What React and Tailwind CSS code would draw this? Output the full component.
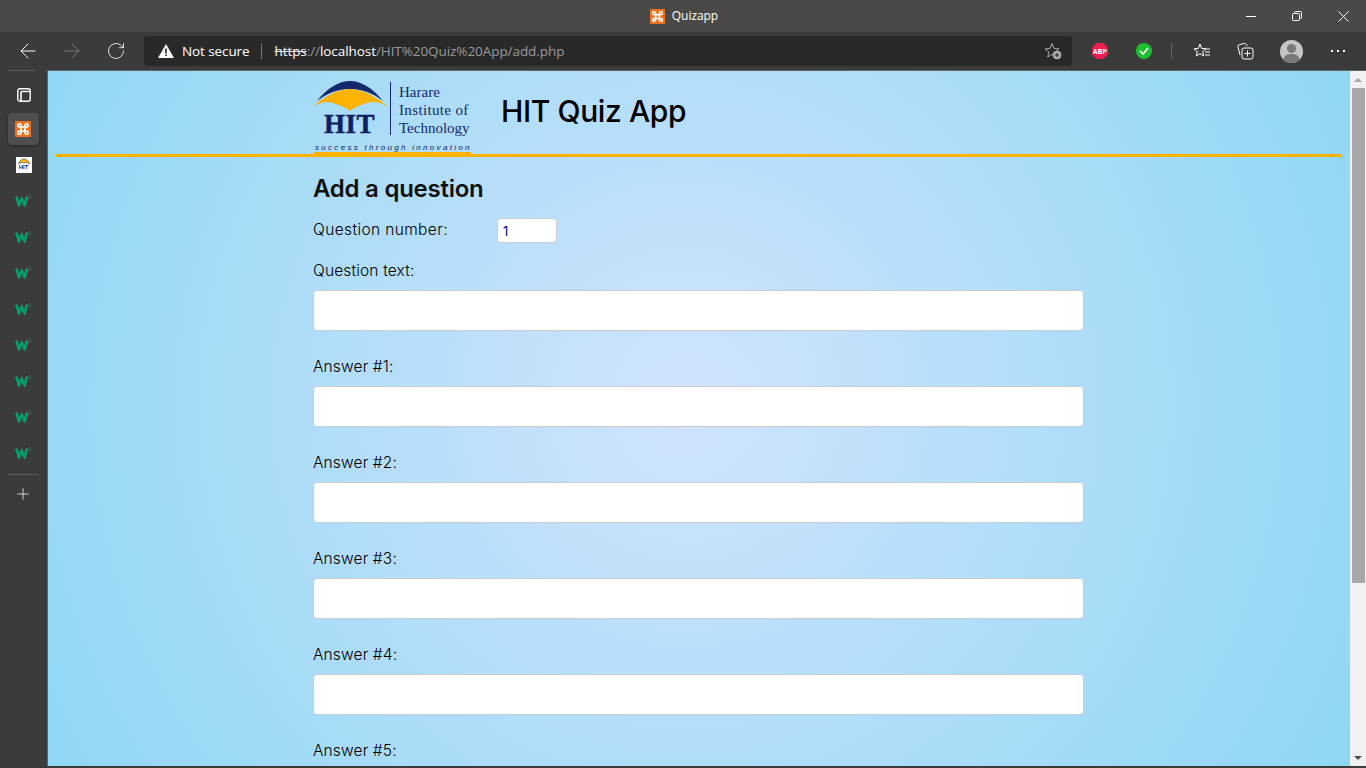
import React from "react";
import { ArrowLeft, ArrowRight, Plus, RotateCw } from "lucide-react";

const w3Tabs = [0, 1, 2, 3, 4, 5, 6, 7];

function XamppIcon({ size = 16 }) {
  return (
    <svg width={size} height={size} viewBox="0 0 16 16">
      <rect width="16" height="16" rx="1" fill="#ee7120" />
      <path d="M6 6h4v4H6zM6 6V4.6A1.6 1.6 0 1 0 4.6 6H6M10 6V4.6A1.6 1.6 0 1 1 11.4 6H10M6 10v1.4A1.6 1.6 0 1 1 4.6 10H6M10 10v1.4a1.6 1.6 0 1 0 1.4-1.4H10" fill="none" stroke="#fff" strokeWidth="1.6" />
    </svg>
  );
}

function W3Icon() {
  return (
    <svg className="-mt-[2px]" width="17" height="13" viewBox="0 0 17 13">
      <path d="M1.4 2.5L4 11l2.8-6 2.8 6 2.6-8.5" fill="none" stroke="#0b9a6d" strokeWidth="2.8" />
      <text x="13" y="4.8" fontSize="5.5" fill="#4f7d6e" fontFamily="Liberation Sans, sans-serif">3</text>
    </svg>
  );
}

function HitLogo() {
  return (
    <div className="relative w-[160px] h-[82px] shrink-0">
      <svg className="absolute left-0 top-[9px]" width="76" height="31" viewBox="0 0 76 31">
        <path d="M4 20C14 7 26 0 37 0s23 7 33 20C60 12 49 8 37 8S14 12 4 20z" fill="#14286e" />
        <path d="M0 26C10 16 25 8 37 8s27 8 38 18c-9-6-17-6-24-3-6 2-11 4-14 7-3-3-8-5-14-7-7-3-15-3-23 3z" fill="#fbb202" />
      </svg>
      <span className="absolute left-[11px] top-[34px] font-['Liberation_Serif',serif] font-bold text-[27px] leading-[36px] text-[#10205f] tracking-[0.5px] [-webkit-text-stroke:0.5px_#10205f]">HIT</span>
      <div className="absolute left-[77px] top-[10px] w-px h-[53px] bg-[#14286e]" />
      <div className="absolute left-[86px] top-[11px] font-['Liberation_Serif',serif] text-[15px] leading-[18px] text-[#14286e] whitespace-nowrap">
        <div>Harare</div>
        <div className="tracking-[0.35px]">Institute of</div>
        <div>Technology</div>
      </div>
      <span className="absolute left-[2px] top-[70px] font-['Liberation_Sans',sans-serif] italic text-[8px] leading-[12px] tracking-[2.3px] text-[#10205c] whitespace-nowrap">success through innovation</span>
      <div className="absolute left-[1px] top-[80px] w-[157px] h-[2px] bg-[#fbb202]" />
    </div>
  );
}

function Field({ label }) {
  return (
    <div className="mb-[23px]">
      <label className="block h-6 mb-2 pt-px text-[15.5px] leading-6 font-light text-black tracking-[0.15px]">{label}</label>
      <input className="block w-full h-[41px] bg-white border border-[#ccc] rounded-[4px]" />
    </div>
  );
}

export default function App() {
  return (
    <div className="h-screen flex flex-col overflow-hidden bg-[#3b3b3b] font-['Segoe_UI','Open_Sans',sans-serif]">
      {/* Title bar */}
      <div className="h-8 shrink-0 bg-[#4a4947] relative flex items-center justify-center">
        <div className="flex items-center gap-[7px] ml-[2px]">
          <XamppIcon size={15} />
          <span className="text-xs text-white font-['Open_Sans',sans-serif] tracking-[-0.05px]">Quizapp</span>
        </div>
        <div className="absolute right-0 top-0 h-8 flex items-center">
          <div className="w-[46px] flex justify-center"><div className="w-[10px] h-px bg-white" /></div>
          <div className="w-[46px] flex justify-center">
            <svg width="12" height="12" viewBox="0 0 12 12" fill="none" stroke="#fff" strokeWidth="1">
              <rect x="1.5" y="3.5" width="7" height="7" rx="1" />
              <path d="M3.5 3.5v-1a1 1 0 0 1 1-1h5a1 1 0 0 1 1 1v5a1 1 0 0 1-1 1h-1" />
            </svg>
          </div>
          <div className="w-[46px] flex justify-center">
            <svg width="11" height="11" viewBox="0 0 11 11" fill="none" stroke="#fff" strokeWidth="1"><path d="M.5.5l10 10M10.5.5l-10 10" /></svg>
          </div>
        </div>
      </div>

      {/* Toolbar */}
      <div className="h-[38px] shrink-0 bg-[#3b3b3b] flex items-center">
        <div className="w-[144px] shrink-0 flex items-center pl-[6px]">
          <div className="w-11 flex justify-center"><ArrowLeft size={24} strokeWidth={1} className="text-white" /></div>
          <div className="w-11 flex justify-center"><ArrowRight size={24} strokeWidth={1} className="text-[#777]" /></div>
          <div className="w-11 flex justify-center"><RotateCw size={20} strokeWidth={1} className="text-white" /></div>
        </div>
        <div className="w-[928px] h-[30px] rounded-[4px] bg-[#292929] flex items-center pl-[14px] pr-[10px]">
          <svg width="16" height="14" viewBox="0 0 16 14"><path d="M8 0l8 14H0z" fill="#fff" /><path d="M7.2 4.5h1.6v5H7.2zM7.2 10.5h1.6v1.6H7.2z" fill="#292929" /></svg>
          <span className="ml-2 text-[13.5px] text-white font-['Open_Sans',sans-serif] tracking-[-0.1px]">Not secure</span>
          <div className="w-px h-4 bg-[#777] mx-3" />
          <span className="text-[13.5px] text-[#9a9a9a] font-['Open_Sans',sans-serif] tracking-[-0.07px]">
            <span className="text-white line-through decoration-[#e0e0e0]">https</span>://<span className="text-white">localhost</span>/HIT%20Quiz%20App/add.php
          </span>
          <div className="ml-auto w-[18px] h-[18px]">
            <svg width="18" height="18" viewBox="0 0 18 18" fill="none" stroke="#a8a8a8" strokeWidth="1">
              <path d="M8 1.5l2 5 5 .3-3.9 3.3 1.2 4.9L8 12.3l-4.3 2.7 1.2-4.9L1 6.8l5-.3z" />
              <circle cx="13" cy="13" r="4" fill="#a8a8a8" />
              <path d="M13 11v4M11 13h4" stroke="#292929" />
            </svg>
          </div>
        </div>
        <div className="flex-1 flex items-center">
          <svg className="ml-[20px]" width="16" height="16" viewBox="0 0 16 16">
            <path d="M4.7 0h6.6L16 4.7v6.6L11.3 16H4.7L0 11.3V4.7z" fill="#ea1f4f" />
            <text x="8" y="10.8" textAnchor="middle" fontSize="7.5" fontWeight="700" fill="#fff" fontFamily="Liberation Mono, monospace" textLength="14">ABP</text>
          </svg>
          <div className="w-4 h-4 ml-[28px] rounded-full bg-[#1ec02f] flex items-center justify-center">
            <svg width="10" height="8" viewBox="0 0 10 8" fill="none" stroke="#fff" strokeWidth="1.6"><path d="M1 4l3 3 5-6" /></svg>
          </div>
          <div className="w-px h-4 bg-[#666] ml-[19px]" />
          <svg className="ml-[21px]" width="18" height="18" viewBox="0 0 18 18" fill="none" stroke="#fff" strokeWidth="1">
            <path d="M7 2l1.7 4.5 4.3.2-3.3 2.8 1 4.5L7 11.6 3.3 14l1-4.5L1 6.7l4.3-.2z" />
            <path d="M12 7h5M12 10h5M12 13h5" />
          </svg>
          <svg className="ml-[25px]" width="18" height="18" viewBox="0 0 18 18" fill="none" stroke="#fff" strokeWidth="1">
            <path d="M4 13L2 5a2 2 0 0 1 1.5-2.5l5-1a2 2 0 0 1 2 1L11 4" />
            <rect x="6" y="6" width="11" height="11" rx="2" />
            <path d="M11.5 8.5v6M8.5 11.5h6" />
          </svg>
          <div className="ml-[26px] w-[23px] h-[23px] rounded-full bg-[#c8c6c4] overflow-hidden relative">
            <div className="absolute left-[7px] top-[4px] w-[9px] h-[9px] rounded-full bg-[#7a7875]" />
            <div className="absolute left-[3px] top-[14px] w-[17px] h-[14px] rounded-full bg-[#7a7875]" />
          </div>
          <div className="ml-[28px] flex gap-1">
            <span className="w-[2px] h-[2px] bg-white" />
            <span className="w-[2px] h-[2px] bg-white" />
            <span className="w-[2px] h-[2px] bg-white" />
          </div>
        </div>
      </div>

      {/* Body */}
      <div className="flex-1 min-h-0 flex mb-[2px]">
        {/* Vertical tabs */}
        <div className="w-12 shrink-0 bg-[#3b3b3b] border-r border-[#5e6468] flex flex-col items-center">
          <div className="w-[27px] h-px bg-[#5a5a5a] -ml-[5px]" />
          <div className="h-[36px] mt-[6px] flex items-center justify-center">
            <svg width="14" height="14" viewBox="0 0 14 14" fill="none" stroke="#fff" strokeWidth="1.4">
              <rect x="0.8" y="0.8" width="12.4" height="12.4" rx="2" />
              <path d="M4 3.5h9" />
              <path d="M4 3.5V13" strokeWidth="1.6" />
            </svg>
          </div>
          <div className="w-[31px] h-[32px] -ml-[1px] rounded-[4px] bg-[#4f4f4f] shadow-[0_1px_3px_rgba(0,0,0,0.4)] flex items-center justify-center">
            <XamppIcon />
          </div>
          <div className="h-[36px] mt-[2px] flex items-center justify-center">
            <div className="w-4 h-4 bg-white flex flex-col items-center overflow-hidden">
              <svg width="14" height="6" viewBox="0 0 14 6" className="mt-px">
                <path d="M1 6C3 2 5 1 7 1s4 1 6 5C10 4 4 4 1 6z" fill="#fbb202" stroke="#14286e" strokeWidth="0.5" />
              </svg>
              <span className="text-[6px] leading-[7px] font-bold text-[#14286e] font-['Liberation_Sans',sans-serif]">HIT</span>
            </div>
          </div>
          {w3Tabs.map((t) => (
            <div key={t} className="h-[36px] flex items-center justify-center"><W3Icon /></div>
          ))}
          <div className="w-[30px] h-px bg-[#5a5a5a] mt-[3px] -ml-[2px]" />
          <div className="h-[38px] flex items-center justify-center -ml-[2px]">
            <Plus size={18} strokeWidth={1} className="text-white" />
          </div>
        </div>

        {/* Page */}
        <div className="flex-1 min-w-0 overflow-hidden border-t border-[#5e6468] bg-[radial-gradient(circle_at_49%_48%,#d2e4fd_0%,#bcdffa_30%,#8dd7f3_100%)] font-['Inter',sans-serif]">
          <div className="mx-2 h-[86px] border-b-[3px] border-[#fbb202] pl-[257px] pt-px flex items-start">
            <HitLogo />
            <h1 className="ml-[28px] mt-[19px] text-[30px] leading-[40px] text-black font-medium tracking-[-0.4px]">HIT Quiz App</h1>
          </div>
          <div className="w-[771px] ml-[265px]">
            <h2 className="mt-[14px] mb-[11px] text-[24px] leading-9 font-semibold text-[#111] tracking-[-0.25px]">Add a question</h2>
            <div className="flex items-center h-[25px] mb-[15px]">
              <label className="w-[184px] pb-[2px] text-[15.5px] font-light text-black tracking-[0.38px]">Question number:</label>
              <input readOnly value="1" className="w-[60px] h-[25px] bg-white border border-[#ccc] rounded-[4px] px-[5px] text-[13px] text-[#00007f]" />
            </div>
            <Field label="Question text:" />
            <Field label="Answer #1:" />
            <Field label="Answer #2:" />
            <Field label="Answer #3:" />
            <Field label="Answer #4:" />
            <Field label="Answer #5:" />
          </div>
        </div>

        {/* Scrollbar */}
        <div className="w-4 shrink-0 border-t border-[#5e6468] bg-[#f1f1f1] flex flex-col items-center">
          <div className="h-[17px] flex items-center justify-center">
            <div className="w-0 h-0 border-x-[4px] border-x-transparent border-b-[4px] border-b-[#a3a3a3]" />
          </div>
          <div className="w-[13px] h-[495px] bg-[#a8a8a8]" />
          <div className="mt-auto h-[17px] flex items-center justify-center">
            <div className="w-0 h-0 border-x-[4px] border-x-transparent border-t-[4px] border-t-[#505050]" />
          </div>
        </div>
      </div>
    </div>
  );
}
